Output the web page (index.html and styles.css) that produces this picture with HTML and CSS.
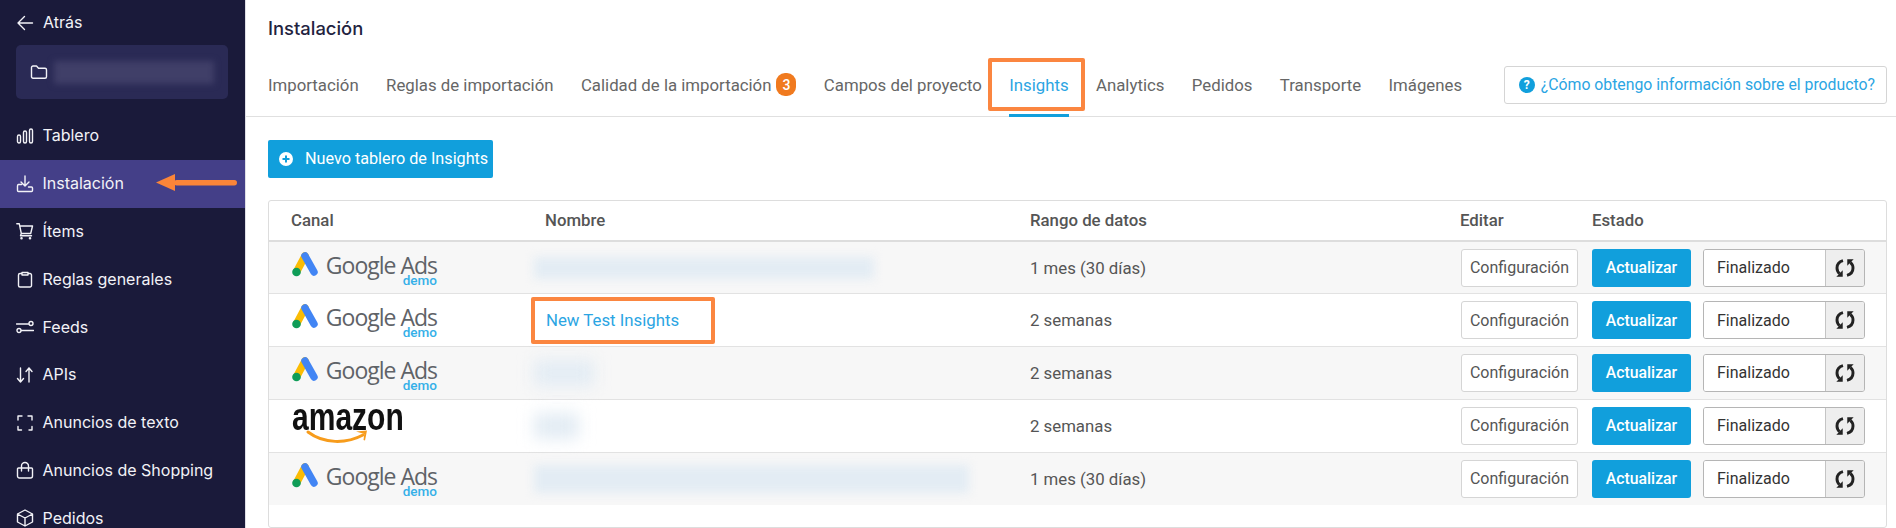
FILE: index.html
```html
<!DOCTYPE html>
<html lang="es">
<head>
<meta charset="utf-8">
<title>Instalación</title>
<link rel="stylesheet" href="styles.css">
</head>
<body>
<div class="app">
  <aside class="sidebar">
    <div class="back">
      <svg class="ico" viewBox="0 0 18 18"><path d="M16.500 9H2M8.500 2.500 2 9l6.500 6.500"/></svg>
      <span>Atrás</span>
    </div>
    <div class="project">
      <svg class="ico" viewBox="0 0 18 18"><path d="M1.500 4.500a1.500 1.500 0 0 1 1.500-1.500h3.500l2 2.200H15a1.500 1.500 0 0 1 1.500 1.500v7a1.500 1.500 0 0 1-1.500 1.500H3a1.500 1.500 0 0 1-1.500-1.500z"/></svg>
      <div class="blur-name"></div>
    </div>
    <nav class="nav">
      <a class="nav-item"><svg class="ico" viewBox="0 0 18 18"><rect x="1.500" y="8" width="3" height="8" rx="1.500"/><rect x="7.500" y="4" width="3" height="12" rx="1.500"/><rect x="13.500" y="2" width="3" height="14" rx="1.500"/></svg><span>Tablero</span></a>
      <a class="nav-item active"><svg class="ico" viewBox="0 0 18 18"><path d="M9 1v9.500M5 7l4 4 4-4M5.500 9.500H2.500a1.500 1.500 0 0 0-1 1.500v4.500a1 1 0 0 0 1 1h13a1 1 0 0 0 1-1V13a1 1 0 0 0-1-1h-3"/></svg><span>Instalación</span></a>
      <a class="nav-item"><svg class="ico" viewBox="0 0 18 18"><path d="M.8 1.800h2.500l2 9.700h9.400l1.800-7.500H3.800M5.300 11.500l-.8 2.300h11"/><circle cx="5.500" cy="16.300" r=".6"/><circle cx="14" cy="16.300" r=".6"/></svg><span>Ítems</span></a>
      <a class="nav-item"><svg class="ico" viewBox="0 0 18 18"><path d="M6 3.500H4a1.500 1.500 0 0 0-1.500 1.500v10.500A1.500 1.500 0 0 0 4 17h10a1.500 1.500 0 0 0 1.500-1.500V5A1.500 1.500 0 0 0 14 3.500h-2M6 2.500h6v2.500H6z"/></svg><span>Reglas generales</span></a>
      <a class="nav-item"><svg class="ico" viewBox="0 0 18 18"><path d="M.5 6h12M5.500 12.500h12"/><circle cx="15" cy="5.500" r="2"/><circle cx="3" cy="12.500" r="2"/></svg><span>Feeds</span></a>
      <a class="nav-item"><svg class="ico" viewBox="0 0 18 18"><path d="M4.500 2v14M1.500 12.500l3 3.500 3-3.500M13 16V2M10 5.500 13 2l3 3.500"/></svg><span>APIs</span></a>
      <a class="nav-item"><svg class="ico" viewBox="0 0 18 18"><path d="M2 6V2h4M12 2h4v4M16 12.500v3.500h-3M5.500 16H2v-3.500"/></svg><span>Anuncios de texto</span></a>
      <a class="nav-item"><svg class="ico" viewBox="0 0 18 18"><path d="M2.500 7h13a1 1 0 0 1 1 1v7a2 2 0 0 1-2 2h-11a2 2 0 0 1-2-2V8a1 1 0 0 1 1-1zM5.500 10V5a3.500 3.500 0 0 1 7 0v5"/></svg><span>Anuncios de Shopping</span></a>
      <a class="nav-item"><svg class="ico" viewBox="0 0 18 18"><path d="M9 1 1.500 5v8L9 17l7.500-4V5zM1.500 5 9 9l7.500-4M9 9v8"/></svg><span>Pedidos</span></a>
    </nav>
    <svg class="side-arrow" viewBox="0 0 82 18"><path class="arrow-fill" d="M0 8.500 19 0v17z"/><rect class="arrow-fill" x="18" y="6" width="63" height="5.500" rx="2.700"/></svg>
  </aside>

  <main class="main">
    <header class="head">
      <h1 class="title">Instalación</h1>
      <div class="tabs">
        <a class="tab">Importación</a>
        <a class="tab">Reglas de importación</a>
        <a class="tab">Calidad de la importación <span class="badge">3</span></a>
        <a class="tab">Campos del proyecto</a>
        <a class="tab current">Insights</a>
        <a class="tab">Analytics</a>
        <a class="tab">Pedidos</a>
        <a class="tab">Transporte</a>
        <a class="tab">Imágenes</a>
        <a class="help"><span class="help-dot">?</span>¿Cómo obtengo información sobre el producto?</a>
      </div>
      <div class="mark mark-tab"></div>
    </header>

    <section class="content">
      <button class="new-btn"><svg class="plus" viewBox="0 0 16 16"><circle cx="8" cy="8" r="8"/><path d="M8 4.500v7M4.500 8h7"/></svg>Nuevo tablero de Insights</button>

      <div class="card">
        <table class="table">
          <colgroup><col class="c1"><col class="c2"><col class="c3"><col class="c4"><col></colgroup>
          <thead><tr><th>Canal</th><th>Nombre</th><th>Rango de datos</th><th>Editar</th><th>Estado</th></tr></thead>
          <tbody>
            <tr>
              <td><div class="gads"><svg class="gads-mark" viewBox="0 0 27 26"><path class="g-y" d="M13 5 5 20"/><path class="g-b" d="M13 5l9 16"/><circle class="g-g" cx="4.500" cy="21" r="4.300"/></svg><div class="gads-text"><span class="gads-name">Google Ads</span><span class="demo">demo</span></div></div></td>
              <td><div class="blur b-long"></div></td>
              <td>1 mes (30 días)</td>
              <td><button class="btn-cfg">Configuración</button></td>
              <td><div class="state"><button class="btn-upd">Actualizar</button><div class="status"><span class="status-val">Finalizado</span><span class="status-add"><svg class="sync" viewBox="0 0 18 18"><path d="M7.500 3.500C4.500 4.300 3 6.500 3 9c0 1.800.8 3.300 2 4.300M10.500 14.500c3-.8 4.500-3 4.500-5.500 0-1.800-.8-3.300-2-4.300"/><path class="sync-head" d="M2.500 15.500h4.800v-4.800zM15.500 2.500h-4.800v4.800z"/></svg></span></div></div></td>
            </tr>
            <tr>
              <td><div class="gads"><svg class="gads-mark" viewBox="0 0 27 26"><path class="g-y" d="M13 5 5 20"/><path class="g-b" d="M13 5l9 16"/><circle class="g-g" cx="4.500" cy="21" r="4.300"/></svg><div class="gads-text"><span class="gads-name">Google Ads</span><span class="demo">demo</span></div></div></td>
              <td><a class="link">New Test Insights</a><div class="mark mark-link"></div></td>
              <td>2 semanas</td>
              <td><button class="btn-cfg">Configuración</button></td>
              <td><div class="state"><button class="btn-upd">Actualizar</button><div class="status"><span class="status-val">Finalizado</span><span class="status-add"><svg class="sync" viewBox="0 0 18 18"><path d="M7.500 3.500C4.500 4.300 3 6.500 3 9c0 1.800.8 3.300 2 4.300M10.500 14.500c3-.8 4.500-3 4.500-5.500 0-1.800-.8-3.300-2-4.300"/><path class="sync-head" d="M2.500 15.500h4.800v-4.800zM15.500 2.500h-4.800v4.800z"/></svg></span></div></div></td>
            </tr>
            <tr>
              <td><div class="gads"><svg class="gads-mark" viewBox="0 0 27 26"><path class="g-y" d="M13 5 5 20"/><path class="g-b" d="M13 5l9 16"/><circle class="g-g" cx="4.500" cy="21" r="4.300"/></svg><div class="gads-text"><span class="gads-name">Google Ads</span><span class="demo">demo</span></div></div></td>
              <td><div class="blur b-short"></div></td>
              <td>2 semanas</td>
              <td><button class="btn-cfg">Configuración</button></td>
              <td><div class="state"><button class="btn-upd">Actualizar</button><div class="status"><span class="status-val">Finalizado</span><span class="status-add"><svg class="sync" viewBox="0 0 18 18"><path d="M7.500 3.500C4.500 4.300 3 6.500 3 9c0 1.800.8 3.300 2 4.300M10.500 14.500c3-.8 4.500-3 4.500-5.500 0-1.800-.8-3.300-2-4.300"/><path class="sync-head" d="M2.500 15.500h4.800v-4.800zM15.500 2.500h-4.800v4.800z"/></svg></span></div></div></td>
            </tr>
            <tr>
              <td><div class="amazon"><span class="amazon-name">amazon</span><svg class="smile" viewBox="0 0 62 14"><path class="smile-line" d="M1 2c16 12 38 12 55 3"/><path class="smile-head" d="M49 1.500l11-1-2 10-1.500-.5.800-6z"/></svg></div></td>
              <td><div class="blur b-tiny"></div></td>
              <td>2 semanas</td>
              <td><button class="btn-cfg">Configuración</button></td>
              <td><div class="state"><button class="btn-upd">Actualizar</button><div class="status"><span class="status-val">Finalizado</span><span class="status-add"><svg class="sync" viewBox="0 0 18 18"><path d="M7.500 3.500C4.500 4.300 3 6.500 3 9c0 1.800.8 3.300 2 4.300M10.500 14.500c3-.8 4.500-3 4.500-5.500 0-1.800-.8-3.300-2-4.300"/><path class="sync-head" d="M2.500 15.500h4.800v-4.800zM15.500 2.500h-4.800v4.800z"/></svg></span></div></div></td>
            </tr>
            <tr>
              <td><div class="gads"><svg class="gads-mark" viewBox="0 0 27 26"><path class="g-y" d="M13 5 5 20"/><path class="g-b" d="M13 5l9 16"/><circle class="g-g" cx="4.500" cy="21" r="4.300"/></svg><div class="gads-text"><span class="gads-name">Google Ads</span><span class="demo">demo</span></div></div></td>
              <td><div class="blur b-xlong"></div></td>
              <td>1 mes (30 días)</td>
              <td><button class="btn-cfg">Configuración</button></td>
              <td><div class="state"><button class="btn-upd">Actualizar</button><div class="status"><span class="status-val">Finalizado</span><span class="status-add"><svg class="sync" viewBox="0 0 18 18"><path d="M7.500 3.500C4.500 4.300 3 6.500 3 9c0 1.800.8 3.300 2 4.300M10.500 14.500c3-.8 4.500-3 4.500-5.500 0-1.800-.8-3.300-2-4.300"/><path class="sync-head" d="M2.500 15.500h4.800v-4.800zM15.500 2.500h-4.800v4.800z"/></svg></span></div></div></td>
            </tr>
          </tbody>
        </table>
      </div>
    </section>
  </main>
</div>
</body>
</html>
```
FILE: styles.css
```css
* { box-sizing: border-box; }
html, body { margin: 0; height: 100%; overflow: hidden; background: #fff; }
body { font-family: Roboto, "Liberation Sans", sans-serif; font-size: 16.8px; color: #555; }
.app { display: flex; height: 528px; overflow: hidden; }

/* Sidebar */
.sidebar { position: relative; flex: 0 0 245px; background: #1a1a3a; color: #f2f2f7; font-family: Inter, "Liberation Sans", sans-serif; font-size: 16px; overflow: hidden; }
.sidebar span { margin-bottom: 1px; }
.ico { width: 18px; height: 18px; flex: none; fill: none; stroke: #f2f2f7; stroke-width: 1.400; stroke-linecap: round; stroke-linejoin: round; }
.back { display: flex; align-items: center; gap: 9px; height: 45px; padding-left: 16px; }
.project { display: flex; align-items: center; gap: 6px; height: 54px; margin: 0 17px 13px 16px; padding-left: 14px; background: #2a2a55; border-radius: 5px; }
.blur-name { width: 160px; height: 23px; background: #403f68; filter: blur(3px); }
.nav { display: flex; flex-direction: column; }
.nav-item { display: flex; align-items: center; gap: 8.500px; height: 47.800px; padding-left: 16px; }
.nav-item.active { background: #443f88; }
.side-arrow { position: absolute; left: 156px; top: 174px; width: 82px; height: 18px; }
.arrow-fill { fill: #fb8539; }

/* Header */
.main { flex: 1; min-width: 0; border-left: 1px solid #dfdfe6; }
.head { position: relative; height: 117px; padding: 17px 9px 0 22px; border-bottom: 1px solid #e0e0e0; }
.title { margin: 0; font-family: Inter, "Liberation Sans", sans-serif; font-size: 18.400px; line-height: 22px; font-weight: 500; color: #1f2340; }
.tabs { display: flex; align-items: center; gap: 27.400px; margin-top: 27px; height: 37px; }
.tab { position: relative; display: flex; align-items: center; gap: 5px; white-space: nowrap; color: #666; }
.tab.current { color: #2ba5e3; }
.tab.current::after { content: ""; position: absolute; left: 0; right: 0; top: 39px; height: 3px; background: #119fdc; }
.badge { display: inline-flex; align-items: center; justify-content: center; width: 20px; height: 23px; border-radius: 9px; background: #f07a1f; color: #fff; font-size: 14px; font-weight: 500; }
.help { display: flex; align-items: center; margin-left: auto; gap: 6px; height: 38px; padding: 0 11px 0 14px; border: 1px solid #d5d5d5; border-radius: 3px; color: #2ba5e3; white-space: nowrap; font-size: 15.800px; }
.help-dot { display: flex; align-items: center; justify-content: center; width: 16px; height: 16px; border-radius: 50%; background: #119fdc; color: #fff; font-size: 12px; font-weight: 700; }
.mark { position: absolute; border: 4px solid #fb8640; border-radius: 2px; pointer-events: none; }
.mark-tab { left: 742px; top: 58px; width: 97px; height: 53px; }

/* Content */
.content { padding: 23px 9px 0 22px; }
.new-btn { display: flex; align-items: center; gap: 11px; width: 225px; height: 38px; padding: 0 0 2px 10px; border: 0; border-radius: 2px; background: #119fdc; color: #fff; font: 400 16.200px Roboto, sans-serif; }
.plus { width: 16px; height: 16px; flex: none; margin-top: 2px; fill: #fff; stroke: #119fdc; stroke-width: 2; }
.card { margin-top: 22px; padding-bottom: 22px; border: 1px solid #ddd; border-radius: 3px; }
.table { width: 100%; border-collapse: collapse; table-layout: fixed; }
.c1 { width: 254px; }
.c2 { width: 484px; }
.c3 { width: 431px; }
.c4 { width: 150px; }
th { height: 40px; padding: 0 0 2px 22px; text-align: left; font-weight: 500; color: #555; border-bottom: 2px solid #ddd; }
th:nth-child(3) { padding-left: 23px; }
td { position: relative; height: 52.800px; padding: 0 0 0 23px; border-bottom: 1px solid #e2e2e2; color: #555; }
th:nth-child(5), td:nth-child(5) { padding-left: 4px; }
tbody tr:nth-child(odd) { background: #f7f7f7; }
tbody tr:last-child td { border-bottom: 0; }
.link { color: #2ba5e3; }
.mark-link { left: 8px; top: 3px; width: 184px; height: 47px; }
.blur { margin-left: -12px; height: 22px; background: #e3ecf4; filter: blur(5px); }
.b-long { width: 340px; }
.b-short { width: 60px; height: 26px; filter: blur(8px); }
.b-tiny { width: 45px; height: 26px; filter: blur(8px); }
.b-xlong { width: 435px; height: 28px; }

/* Channel logos */
.gads { display: flex; gap: 8px; align-items: flex-start; height: 34px; }
.gads-mark { width: 27px; height: 26px; flex: none; fill: none; }
.g-y { stroke: #fbbc04; stroke-width: 7.500; stroke-linecap: round; }
.g-b { stroke: #4285f4; stroke-width: 7.500; stroke-linecap: round; }
.g-g { fill: #0f9d58; stroke: none; }
.gads-text { display: flex; flex-direction: column; align-items: flex-end; width: 110px; padding-top: 6px; }
.gads-name { font-family: "Open Sans", sans-serif; font-size: 23px; line-height: 17px; letter-spacing: -1px; color: #5f6368; white-space: nowrap; }
.demo { font-size: 13.500px; line-height: 13px; font-weight: 500; color: #35b0e8; }
.amazon { height: 40px; margin-top: -8px; }
.amazon-name { display: block; font-family: "Liberation Sans", sans-serif; font-weight: 700; font-size: 38px; line-height: 30px; color: #111; transform: scaleX(.79); transform-origin: left center; }
.smile { display: block; width: 62px; height: 14px; margin: -2px 0 0 15px; overflow: visible; }
.smile-line { fill: none; stroke: #f79c1c; stroke-width: 3; stroke-linecap: round; }
.smile-head { fill: #f79c1c; }

/* Row controls */
.btn-cfg, .btn-upd { height: 38px; border-radius: 3px; font: 400 16px Roboto, sans-serif; padding: 0; }
.btn-cfg { width: 117px; background: #fff; border: 1px solid #d5d5d5; color: #555; }
.state { display: flex; align-items: center; gap: 12px; }
.btn-upd { width: 99px; border: 0; background: #119fdc; color: #fff; font-weight: 500; font-size: 15.800px; }
.status { display: flex; width: 162px; height: 38px; border: 1px solid #b5b5b5; border-radius: 3px; overflow: hidden; font-size: 16px; }
.status-val { flex: 1; display: flex; align-items: center; padding-left: 13px; background: #fff; color: #333; }
.status-add { display: flex; align-items: center; justify-content: center; width: 39px; background: #eee; border-left: 1px solid #c4c4c4; }
.sync { width: 24px; height: 24px; fill: none; stroke: #222; stroke-width: 2.200; }
.sync-head { fill: #222; stroke: none; }
```
